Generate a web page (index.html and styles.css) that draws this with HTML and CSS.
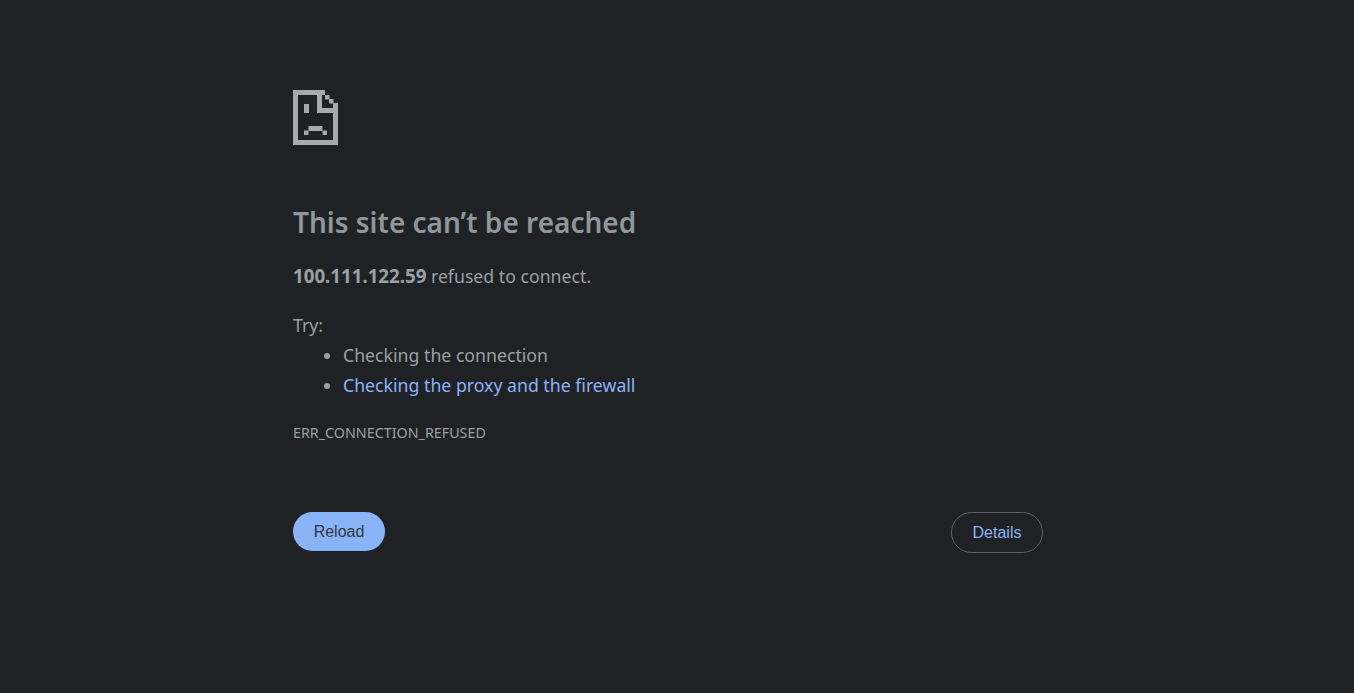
FILE: index.html
```html
<!DOCTYPE html>
<html lang="en">
<head>
    <meta charset="UTF-8">
    <title>100.111.122.59</title>
    <link rel="stylesheet" href="styles.css">
</head>
<body>
    <div class="main-frame">
        <svg class="error-icon" width="45" height="55" viewBox="0 0 45 55">
            <rect x="0" y="0" width="32" height="5"/>
            <rect x="0" y="0" width="5" height="55"/>
            <rect x="0" y="50" width="45" height="5"/>
            <rect x="40" y="13" width="5" height="42"/>
            <rect x="24" y="0" width="5" height="23"/>
            <rect x="24" y="18" width="21" height="5"/>
            <rect x="32" y="5" width="4.5" height="4.5"/>
            <rect x="36" y="9" width="4.5" height="4.5"/>
            <rect x="11" y="14" width="5" height="9"/>
            <rect x="15.5" y="36" width="14" height="5"/>
            <rect x="11" y="40.5" width="4.5" height="4.5"/>
            <rect x="29.5" y="40.5" width="4.5" height="4.5"/>
        </svg>
        <h1 class="title">This site can’t be reached</h1>
        <p class="summary"><strong>100.111.122.59</strong> refused to connect.</p>
        <p class="try-label">Try:</p>
        <ul class="suggestions">
            <li>Checking the connection</li>
            <li><a href="#">Checking the proxy and the firewall</a></li>
        </ul>
        <div class="error-code">ERR_CONNECTION_REFUSED</div>
        <div class="buttons">
            <button class="reload-btn">Reload</button>
            <button class="details-btn">Details</button>
        </div>
    </div>
</body>
</html>
```

FILE: styles.css
```css
body {
    margin: 0;
    background-color: #202124;
    color: #9aa0a6;
    font-family: "Noto Sans", sans-serif;
    font-size: 17.7px;
}

.main-frame {
    width: 750px;
    margin-left: 293px;
    padding-top: 90px;
}

.error-icon {
    display: block;
    fill: #a8a9aa;
}

.title {
    margin: 59px 0 0;
    height: 36px;
    font-size: 28px;
    line-height: 36px;
    font-weight: 600;
    color: #8f969c;
}

.summary {
    margin: 21px 0 0;
    line-height: 30px;
}

.summary strong {
    font-size: 18.7px;
    font-weight: 700;
}

.try-label {
    margin: 19px 0 0;
    line-height: 30px;
}

.suggestions {
    margin: 0;
    padding-left: 50px;
}

.suggestions li {
    line-height: 30px;
}

.suggestions a {
    color: #8ab4f8;
    text-decoration: none;
}

.error-code {
    margin-top: 18px;
    font-size: 14.3px;
    line-height: 30px;
}

.buttons {
    display: flex;
    justify-content: space-between;
    margin-top: 64px;
}

.reload-btn {
    width: 92px;
    height: 39px;
    padding: 0;
    border: none;
    border-radius: 20px;
    background-color: #8ab4f8;
    color: #303540;
    font-family: "Liberation Sans", Arial, sans-serif;
    font-size: 16px;
}

.details-btn {
    width: 92px;
    height: 41px;
    padding: 0;
    border: 1px solid #5f6368;
    border-radius: 21px;
    background-color: transparent;
    color: #8ab4f8;
    font-family: "Liberation Sans", Arial, sans-serif;
    font-size: 16px;
}
```
